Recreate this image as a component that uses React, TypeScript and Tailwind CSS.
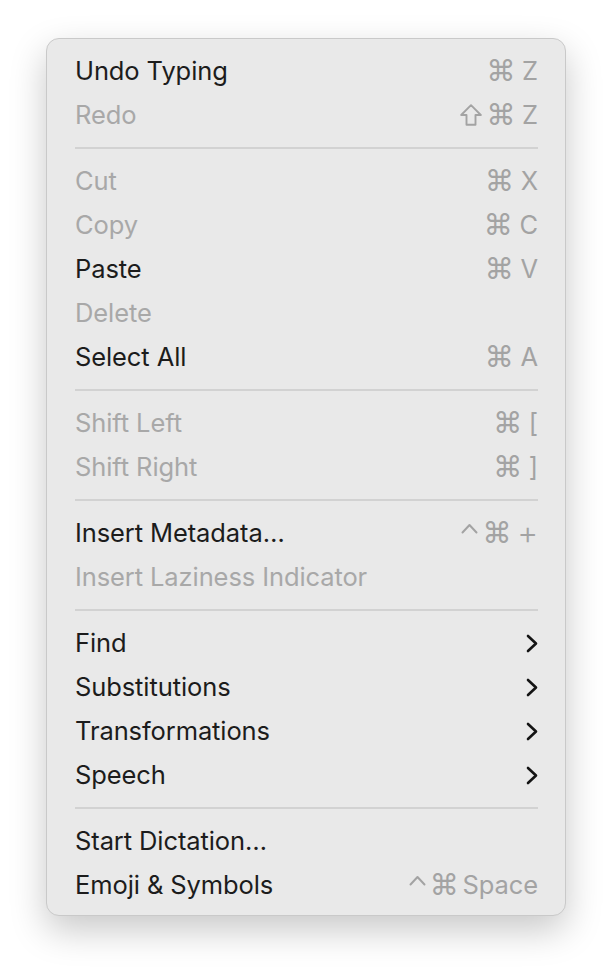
type Item = {
  label: string
  shortcut?: string[]
  disabled?: boolean
  submenu?: boolean
}

const groups: Item[][] = [
  [
    { label: "Undo Typing", shortcut: ["⌘", "Z"] },
    { label: "Redo", shortcut: ["⇧", "⌘", "Z"], disabled: true },
  ],
  [
    { label: "Cut", shortcut: ["⌘", "X"], disabled: true },
    { label: "Copy", shortcut: ["⌘", "C"], disabled: true },
    { label: "Paste", shortcut: ["⌘", "V"] },
    { label: "Delete", disabled: true },
    { label: "Select All", shortcut: ["⌘", "A"] },
  ],
  [
    { label: "Shift Left", shortcut: ["⌘", "["], disabled: true },
    { label: "Shift Right", shortcut: ["⌘", "]"], disabled: true },
  ],
  [
    { label: "Insert Metadata…", shortcut: ["⌃", "⌘", "+"] },
    { label: "Insert Laziness Indicator", disabled: true },
  ],
  [
    { label: "Find", submenu: true },
    { label: "Substitutions", submenu: true },
    { label: "Transformations", submenu: true },
    { label: "Speech", submenu: true },
  ],
  [
    { label: "Start Dictation…" },
    { label: "Emoji & Symbols", shortcut: ["⌃", "⌘", "Space"] },
  ],
]

const Chevron = () => (
  <svg width="12" height="19" viewBox="0 0 12 19" fill="none">
    <path d="M2 2 L10 9.5 L2 17" stroke="#141414" strokeWidth="2.6" strokeLinecap="round" strokeLinejoin="round" />
  </svg>
)

// shift key glyph, outlined arrow
const ShiftGlyph = () => (
  <svg width="22" height="22" viewBox="0 0 22 22" fill="none">
    <path d="M11 1.2 L20.8 11 H15.5 V20.8 H6.5 V11 H1.2 Z" stroke="#a3a3a3" strokeWidth="1.9" strokeLinejoin="round" />
  </svg>
)

// control key glyph, small caret sitting high
const CaretGlyph = () => (
  <svg width="17" height="22" viewBox="0 0 17 22" fill="none">
    <path d="M1.5 10.5 L8.5 3 L15.5 10.5" stroke="#a3a3a3" strokeWidth="2" strokeLinecap="round" strokeLinejoin="round" />
  </svg>
)

const Shortcut = ({ keys }: { keys: string[] }) => (
  <div className="flex flex-row items-center gap-[4px] text-[#a3a3a3] leading-none">
    {keys.map((k, i) => {
      if (k === "⇧") return <ShiftGlyph key={i} />
      if (k === "⌃") return <CaretGlyph key={i} />
      if (k === "⌘")
        return (
          <span key={i} className="font-['DejaVu_Sans',sans-serif] text-[29px] leading-none">
            {k}
          </span>
        )
      if (k === "+")
        return (
          <span key={i} className="ml-[2px] text-[32px] font-light leading-none">
            +
          </span>
        )
      return (
        <span key={i} className={k === "Space" ? "" : "ml-[3px]"}>
          {k}
        </span>
      )
    })}
  </div>
)

const MenuRow = ({ item }: { item: Item }) => (
  <div className="h-[44px] flex flex-row items-center justify-between">
    <span className={item.disabled ? "text-[#a8a8a8]" : "text-[#1c1c1c]"}>{item.label}</span>
    {item.shortcut && <Shortcut keys={item.shortcut} />}
    {item.submenu && <Chevron />}
  </div>
)

export default function App() {
  return (
    <div className="w-[612px] h-[970px] bg-white pt-[38px] pl-[46px]">
      <div className="w-[520px] rounded-[13px] bg-[#e9e9e9] border border-[#c9c9c9] shadow-[0_14px_36px_rgba(0,0,0,0.22)] pt-[10px] pb-[8px] pl-[28px] pr-[27px] font-['Inter',sans-serif] text-[25.5px] tracking-[-0.1px]">
        {groups.map((group, gi) => (
          <div key={gi}>
            {gi > 0 && (
              <div className="h-[22px] flex flex-col justify-center">
                <div className="h-[2px] bg-[#d2d2d2]" />
              </div>
            )}
            {group.map(item => (
              <MenuRow key={item.label} item={item} />
            ))}
          </div>
        ))}
      </div>
    </div>
  )
}
